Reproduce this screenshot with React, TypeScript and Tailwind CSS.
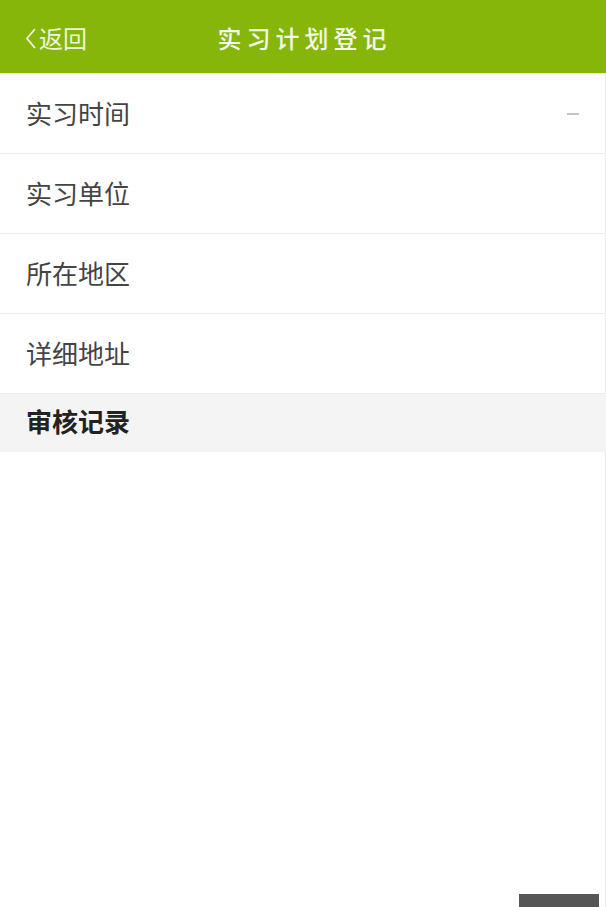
import React from "react";

const rows = ["实习时间", "实习单位", "所在地区", "详细地址"];

export default function App() {
  return (
    <div
      className="w-[606px] h-[907px] bg-white flex flex-col overflow-hidden"
      style={{ fontFamily: '"Noto Sans CJK SC", "Noto Sans", sans-serif' }}
    >
      {/* Header */}
      <div className="h-[73px] bg-[#86b609] flex items-center px-[24px] relative">
        <div className="flex items-center text-[#eef6dc] text-[24px] leading-none pt-[2px]">
          <svg width="13" height="24" viewBox="0 0 13 24" className="mr-[2px]">
            <path d="M11 3 L3 12.5 L11 22" fill="none" stroke="#eef6dc" strokeWidth="1.8" />
          </svg>
          <span>返回</span>
        </div>
        <div className="absolute left-0 right-0 top-0 h-[73px] flex items-center justify-center pointer-events-none">
          <span className="text-[24px] text-[#f4f8e8] font-medium tracking-[5px] pl-[3px] pt-[2px]">实习计划登记</span>
        </div>
      </div>
      <div className="h-[1px] bg-[#e4e9d6]" />

      {/* Rows */}
      {rows.map((r, i) => (
        <div
          key={r}
          className="h-[80px] flex items-center justify-between pl-[26px] pr-[26px] border-b border-[#ececec] border-r border-r-[#eaeaea]"
        >
          <span className="text-[26px] text-[#444444] leading-none pb-[1px]">{r}</span>
          {i === 0 && <span className="w-[12px] h-[2px] bg-[#c4c4c4]" />}
        </div>
      ))}

      <div className="h-[58px] bg-[#f4f4f4] flex items-center pl-[26px]">
        <span className="text-[26px] text-[#222222] font-semibold leading-none pb-[4px]">审核记录</span>
      </div>

      <div className="flex-1 flex items-end justify-end pr-[6px] border-r border-r-[#eaeaea]">
        <div className="w-[80px] h-[13px] bg-[#555555]" />
      </div>
    </div>
  );
}
